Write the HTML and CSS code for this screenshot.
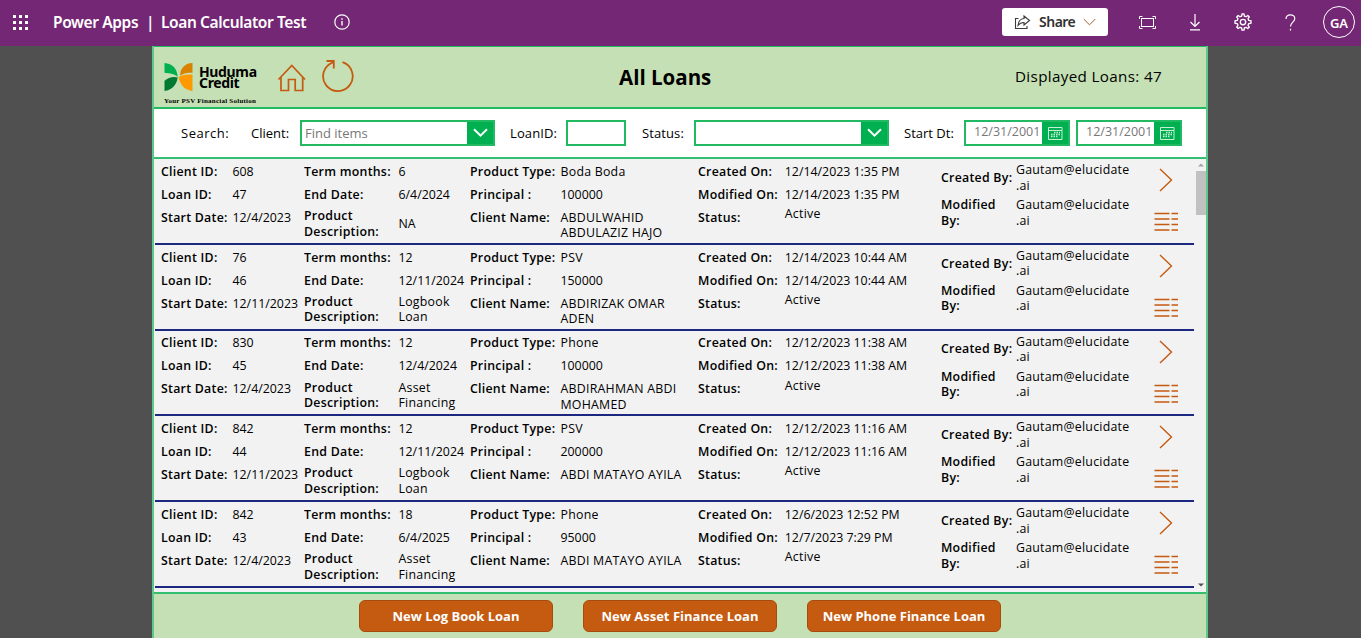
FILE: index.html
```html
<!DOCTYPE html>
<html lang="en">
<head>
<meta charset="utf-8">
<title>Loan Calculator Test - Power Apps</title>
<link rel="stylesheet" href="styles.css">
</head>
<body>
<header class="topbar">
  <svg class="waffle" width="17" height="17" viewBox="0 0 17 17" fill="#fff"><path d="M0 1h3v3H0zM6 1h3v3H6zM12 1h3v3h-3zM0 7h3v3H0zM6 7h3v3H6zM12 7h3v3h-3zM0 13h3v3H0zM6 13h3v3H6zM12 13h3v3h-3z"/></svg>
  <div class="brand">Power Apps</div><div class="bar">|</div><div class="app-name">Loan Calculator Test</div>
  <svg class="info" width="16" height="16" viewBox="0 0 16 16" fill="none" stroke="#fff" stroke-width="1.2"><circle cx="8" cy="8" r="7.2"/><path d="M8 7v4.5M8 4.3v1.5" stroke-width="1.4"/></svg>
  <div class="share">
    <svg width="17" height="15" viewBox="0 0 17 15" fill="none" stroke="#3b3a39" stroke-width="1.1"><path d="M4.500 3.500h-3v10h11.500V11"/><path d="M10 1l5.500 4.500L10 10V7.500C7.500 7.400 5.500 8.500 4 10.500 4.300 6.500 6.500 3.800 10 3.500z"/></svg>
    <span>Share</span>
    <svg width="13" height="8" viewBox="0 0 13 8" fill="none" stroke="#a5622f" stroke-width="1"><path d="M.7 1l5.800 5.800L12.300 1"/></svg>
  </div>
  <svg class="fit" width="17" height="13" viewBox="0 0 17 13" fill="none" stroke="#fff"><rect x="2.500" y="2.500" width="12" height="8"/><path d="M.5 3V.5h3M13.500.5h3V3M.5 10v2.500h3M13.500 12.500h3V10"/></svg>
  <svg class="down" width="12" height="17" viewBox="0 0 12 17" fill="none" stroke="#fff" stroke-width="1.200"><path d="M6 0v12.500M1.500 8L6 12.500 10.500 8M1 15.900h10"/></svg>
  <svg class="gear" width="18" height="18" viewBox="0.500 0 16 16" fill="none" stroke="#fff" stroke-width="1.200" stroke-linejoin="round"><path d="M7.300 2.700L7.600.8h1.800l.3 1.900 1.500.6 1.600-1.100 1.300 1.300L13 5.100l.6 1.500 2 .3v2.200l-2 .3-.6 1.500 1.100 1.600-1.300 1.300-1.600-1.100-1.500.6-.3 1.900H7.600l-.3-1.900-1.500-.6-1.600 1.100-1.300-1.300L4 10.900l-.6-1.500-2-.3V6.900l2-.3L4 5.100 2.900 3.500l1.300-1.300 1.600 1.100z"/><circle cx="8.500" cy="8" r="2.400"/></svg>
  <svg class="help" width="11" height="17" viewBox="0 0 11 17" fill="none" stroke="#fff" stroke-width="1.200"><path d="M1 5C1 2.300 2.800.8 5.300.8S9.800 2.300 9.800 4.600c0 3.600-4.300 3.600-4.300 8M5.500 14.700v1.700"/></svg>
  <div class="avatar">GA</div>
</header>
<main class="app">
  <section class="head">
    <div class="logo">
      <div class="logo-main">
        <svg width="29" height="28" viewBox="0 0 29 28"><path fill="#00b050" d="M.5 0C8.500.5 13.200 5.500 13.700 14 11.500 11 6 10 .5 9.700z"/><path fill="#007a33" d="M.5 28V17.700C4 14.500 9.500 13 13.700 14.500 12.500 22 8 27 .5 28z"/><path fill="#d98200" d="M28.500 0C20.500.5 16.500 5 16 12.500c3-2.300 7.500-2.800 12.500-2.800z"/><path fill="#ff9900" d="M28.500 28V11.700C23 11.200 17.500 11.500 14.500 14.500 16.500 22.500 21 27 28.500 28z"/></svg>
        <div class="logo-name"><div>Huduma</div><div>Credit</div></div>
      </div>
      <div class="tagline">Your PSV Financial Solution</div>
    </div>
    <svg class="home" width="30" height="28" viewBox="0 0 30 28" fill="none" stroke="#c55a11" stroke-width="1.700"><path d="M1.500 15.500L14.800 1.500 28 15.500M4 13.200V26.500h7.500v-11h6.700v11h7.500V13.200"/></svg>
    <svg class="reload" width="33" height="34" viewBox="0 0 33 34" fill="none" stroke="#c55a11" stroke-width="1.800"><path d="M20.500 3.200A14.800 14.800 0 1 1 11 3.300M4.500 2h7.300v7.500"/></svg>
    <h1>All Loans</h1>
    <div class="count">Displayed Loans: 47</div>
  </section>
  <section class="search">
    <span class="s-title">Search:</span>
    <span class="s-client">Client:</span>
    <div class="combo client"><span>Find items</span><i><svg width="15" height="10" viewBox="0 0 15 10" fill="none" stroke="#fff" stroke-width="2"><path d="M1 1.200l6.500 6.500L14 1.200"/></svg></i></div>
    <span class="s-loan">LoanID:</span>
    <div class="combo loan"></div>
    <span class="s-status">Status:</span>
    <div class="combo status"><span></span><i><svg width="15" height="10" viewBox="0 0 15 10" fill="none" stroke="#fff" stroke-width="2"><path d="M1 1.200l6.500 6.500L14 1.200"/></svg></i></div>
    <span class="s-start">Start Dt:</span>
    <div class="combo date"><span>12/31/2001</span><i><svg width="15" height="13" viewBox="0 0 15 13" fill="none" stroke="#c5f0d5"><path d="M.5.5h13.500v12H.5zM.5 3.500H14"/><path d="M6 5.500h6M3 7.500h9M3 9.500h7" stroke-width="1.300" stroke-dasharray="1.500 1"/></svg></i></div>
    <div class="combo date second"><span>12/31/2001</span><i><svg width="15" height="13" viewBox="0 0 15 13" fill="none" stroke="#c5f0d5"><path d="M.5.5h13.500v12H.5zM.5 3.500H14"/><path d="M6 5.500h6M3 7.500h9M3 9.500h7" stroke-width="1.300" stroke-dasharray="1.500 1"/></svg></i></div>
  </section>
  <section class="list">
    <div class="rows" id="rows"></div>
    <div class="scroll"><svg width="6" height="4" viewBox="0 0 6 4"><path d="M0 3.500L3 .5l3 3z" fill="#a3a3a3"/></svg><div class="thumb"></div><svg width="6" height="4" viewBox="0 0 6 4"><path d="M0 .5l3 3 3-3z" fill="#505050"/></svg></div>
  </section>
  <footer class="foot"><button>New Log Book Loan</button><button>New Asset Finance Loan</button><button>New Phone Finance Loan</button></footer>
</main>
<script src="rows.js"></script>
</body>
</html>
```
FILE: rows.js
```js
const loans = [
  ["608", "47", "12/4/2023", "6", "6/4/2024", "NA", "Boda Boda", "100000", "ABDULWAHID<br>ABDULAZIZ HAJO", "12/14/2023 1:35 PM", "12/14/2023 1:35 PM"],
  ["76", "46", "12/11/2023", "12", "12/11/2024", "Logbook<br>Loan", "PSV", "150000", "ABDIRIZAK OMAR<br>ADEN", "12/14/2023 10:44 AM", "12/14/2023 10:44 AM"],
  ["830", "45", "12/4/2023", "12", "12/4/2024", "Asset<br>Financing", "Phone", "100000", "ABDIRAHMAN ABDI<br>MOHAMED", "12/12/2023 11:38 AM", "12/12/2023 11:38 AM"],
  ["842", "44", "12/11/2023", "12", "12/11/2024", "Logbook<br>Loan", "PSV", "200000", "ABDI MATAYO AYILA", "12/12/2023 11:16 AM", "12/12/2023 11:16 AM"],
  ["842", "43", "12/4/2023", "18", "6/4/2025", "Asset<br>Financing", "Phone", "95000", "ABDI MATAYO AYILA", "12/6/2023 12:52 PM", "12/7/2023 7:29 PM"]
];
const column = (kind, cells) =>
  `<div class="col ${kind}">${cells.map(c => `<div class="cell"><span class="${/[A-Za-z]{3}/.test(c) ? "words" : "digits"}">${c}</span></div>`).join("")}</div>`;
const mail = "Gautam@elucidate<br>.ai";
document.getElementById("rows").innerHTML = loans.map(l => `<article class="row">
${column("label", ["Client ID:", "Loan ID:", "Start Date:"])}
${column("value", l.slice(0, 3))}
${column("label desc", ["Term months:", "End Date:", "Product<br>Description:"])}
${column("value desc", l.slice(3, 6))}
${column("label", ["Product Type:", "Principal :", "Client Name:"])}
${column("value", l.slice(6, 9))}
${column("label", ["Created On:", "Modified On:", "Status:"])}
${column("value state", [l[9], l[10], "Active"])}
${column("label by", ["Created By:", "Modified<br>By:"])}
${column("value by", [mail, mail])}
<div class="actions">
<svg width="14" height="24" viewBox="0 0 14 24" fill="none" stroke="#c55a11" stroke-width="1.400"><path d="M1 1l11.500 11L1 23"/></svg>
<svg width="25" height="20" viewBox="0 0 25 20" fill="none" stroke="#c55a11" stroke-width="1.400"><path d="M.5 1.500h15M17.500 1.500H24M.5 7h15M17.500 7H24M.5 12.500h15M17.500 12.500H24M.5 18h15M17.500 18H24"/></svg>
</div></article>`).join("");
```
FILE: styles.css
```css
* { box-sizing: border-box; }
body { margin: 0; height: 638px; overflow: hidden; background: #505050; font-family: "Open Sans", "Noto Sans", sans-serif; color: #000; }
svg { display: block; flex: none; }
.topbar { height: 46px; background: #742774; color: #fff; display: flex; align-items: center; padding: 0 6px 2px 13px; font: 600 15.500px/22px "Noto Sans", sans-serif; letter-spacing: -.38px; white-space: nowrap; }
.brand { margin-left: 23px; width: 92px; }
.bar { width: 16px; padding-left: 1px; }
.app-name { width: 173px; }
.share { margin-left: 652px; width: 106px; height: 28px; background: #fff; border-radius: 3px; color: #323130; font-size: 14px; letter-spacing: -.5px; display: flex; align-items: center; padding-left: 12px; gap: 8px; flex: none; }
.share span { width: 36px; }
.fit { margin-left: 31px; }
.down { margin-left: 33px; }
.gear { margin-left: 33px; }
.help { margin-left: 33px; }
.avatar { width: 32px; height: 32px; border: 1px solid #fff; border-radius: 50%; margin-left: auto; text-align: center; font-size: 13px; line-height: 32px; letter-spacing: 0; }
.app { width: 1056px; height: 592px; margin-left: 152px; border: 2px solid #5cc98a; border-bottom: 0; border-top: 0; }
.head { height: 63px; border: solid #21ba62; border-width: 1px 0 2px; background: #c5e0b4; display: flex; align-items: flex-start; }
.logo { margin: 16px 0 0 10px; width: 113px; height: 44px; flex: none; }
.logo-main { display: flex; gap: 6px; }
.logo-name { font: 700 14px/11px "Noto Sans", sans-serif; letter-spacing: -.35px; padding-top: 3px; }
.tagline { font: 700 7px/9px "Liberation Serif", serif; letter-spacing: .23px; margin-top: 6px; white-space: nowrap; }
.home { margin-top: 17px; }
.reload { margin: 12px 0 0 15px; }
h1 { margin: 17px 0 0 264px; width: 396px; font-size: 20.500px; line-height: 27px; font-weight: 700; }
.count { font-size: 15.200px; line-height: 24px; margin-top: 17px; letter-spacing: .35px; white-space: nowrap; }
.search { height: 50px; background: #fff; border-bottom: 2px solid #33bf70; display: flex; align-items: center; font-size: 13px; white-space: nowrap; padding: 0 0 0 27px; }
.s-title { width: 70px; letter-spacing: .5px; }
.s-client { width: 49px; }
.combo { height: 26px; border: 2px solid #21b962; display: flex; align-items: stretch; flex: none; line-height: 22px; color: #777; }
.combo span { flex: 1; padding-left: 3px; }
.combo i { width: 26px; background: #00b050; display: grid; place-items: center; }
.client { width: 195px; }
.s-loan { margin-left: 15px; width: 56px; letter-spacing: .1px; }
.loan { width: 60px; }
.s-status { margin-left: 16px; width: 52px; letter-spacing: .1px; }
.status { width: 195px; }
.s-start { margin-left: 15px; width: 60px; }
.date { width: 106px; }
.date span { padding-left: 8px; font-size: 12.500px; line-height: 19px; }
.second { margin-left: 6px; }
.list { height: 433px; background: #f2f2f2; display: flex; overflow: hidden; }
.rows { width: 1040px; padding-left: 1px; flex: none; }
.row { height: 85.750px; border-bottom: 2px solid #1c2880; display: grid; grid-template-columns: 71.500px 71.500px 94.500px 71.500px 90.500px 137.500px 86.800px 156.200px 75px 137.500px 26px; padding: 1px 0 0 6px; font-size: 12.350px; line-height: 15.400px; white-space: nowrap; }
.label { font-weight: 600; letter-spacing: .26px; }
.value .words { letter-spacing: .24px; }
.cell { height: 23px; padding-top: 3.800px; }
.desc .cell:last-child { height: 31px; padding: 0; margin-top: 2px; display: flex; align-items: center; }
.state .cell:last-child { padding-top: 0; }
.by .cell { height: 31px; padding: 0; display: flex; align-items: center; margin: 2px 0 4px; }
.actions { display: flex; flex-direction: column; align-items: center; padding-top: 8px; gap: 20px; }
.scroll { width: 11px; margin-left: 1px; display: flex; flex-direction: column; align-items: center; padding-top: 4px; }
.thumb { width: 10px; height: 44px; background: #c1c1c1; margin: 4px 0 auto; }
.scroll svg:last-child { margin-bottom: 5px; }
.foot { height: 46px; background: #c5e0b4; border-top: 2px solid #33bf70; display: flex; gap: 30px; padding: 6px 0 0 205px; }
button { width: 194px; height: 32px; border: 1px solid #a84c0e; border-radius: 6px; background: #c55a11; color: #fff; font: 700 13px/18px "Open Sans", sans-serif; padding: 0; }
```
